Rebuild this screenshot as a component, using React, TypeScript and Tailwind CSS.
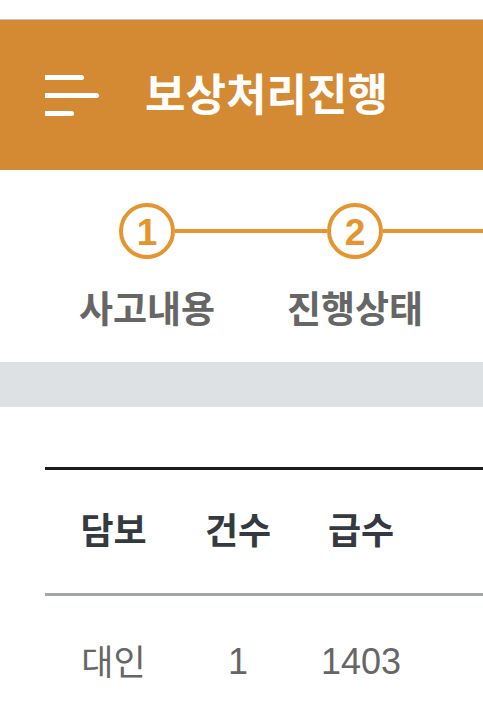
const KR = "font-['Liberation_Sans','Noto_Sans_CJK_KR',sans-serif]";

function Menu() {
  return (
    <div className="flex flex-col gap-[13px] w-[54px]">
      <span className="block h-[5px] w-[39px] bg-white rounded-r-full" />
      <span className="block h-[5px] w-[54px] bg-white rounded-r-full" />
      <span className="block h-[5px] w-[29px] bg-white rounded-r-full" />
    </div>
  );
}

function StepCircle({ n }: { n: number }) {
  return (
    <div className="w-[56px] h-[56px] shrink-0 rounded-full border-[4px] border-[#e5952f] flex items-center justify-center">
      <span className="text-[37px] font-bold leading-none text-[#e5952f] mt-[2px]">{n}</span>
    </div>
  );
}

export default function App() {
  return (
    <div className={`${KR} w-[483px] h-[708px] overflow-hidden bg-white`}>
      <div className="h-[20px] border-b border-[#c4c4c4]" />
      <header className="h-[150px] bg-[#d48a32] flex items-center pl-[45px]">
        <Menu />
        <h1 className="ml-[46px] text-white text-[44px] font-bold leading-none mt-[2px]">보상처리진행</h1>
      </header>

      <section className="h-[192px] pt-[33px]">
        <div className="flex items-center pl-[119px]">
          <StepCircle n={1} />
          <div className="w-[152px] h-[4px] bg-[#e5952f]" />
          <StepCircle n={2} />
          <div className="flex-1 h-[4px] bg-[#e5952f]" />
        </div>
        <div className="flex pl-[43px] mt-[33px] text-[37px] font-bold text-[#666666] leading-none">
          <div className="w-[208px] text-center">사고내용</div>
          <div className="w-[208px] text-center">진행상태</div>
        </div>
      </section>

      <div className="h-[45px] bg-[#dee1e4]" />

      <div className="ml-[45px] mt-[60px] border-t-[3px] border-[#1b1b1b]">
        <div className="flex h-[126px] items-center text-[36px] font-bold text-[#343a40] border-b-[3px] border-[#a3a6a6] leading-none">
          <div className="w-[137px] text-center">담보</div>
          <div className="w-[112px] text-center">건수</div>
          <div className="w-[134px] text-center">급수</div>
        </div>
        <div className="flex h-[126px] items-center text-[#666666] pt-[6px] leading-none">
          <div className="w-[137px] text-center text-[35px]">대인</div>
          <div className="w-[112px] text-center text-[36px]">1</div>
          <div className="w-[134px] text-center text-[36px]">1403</div>
        </div>
      </div>
    </div>
  );
}
